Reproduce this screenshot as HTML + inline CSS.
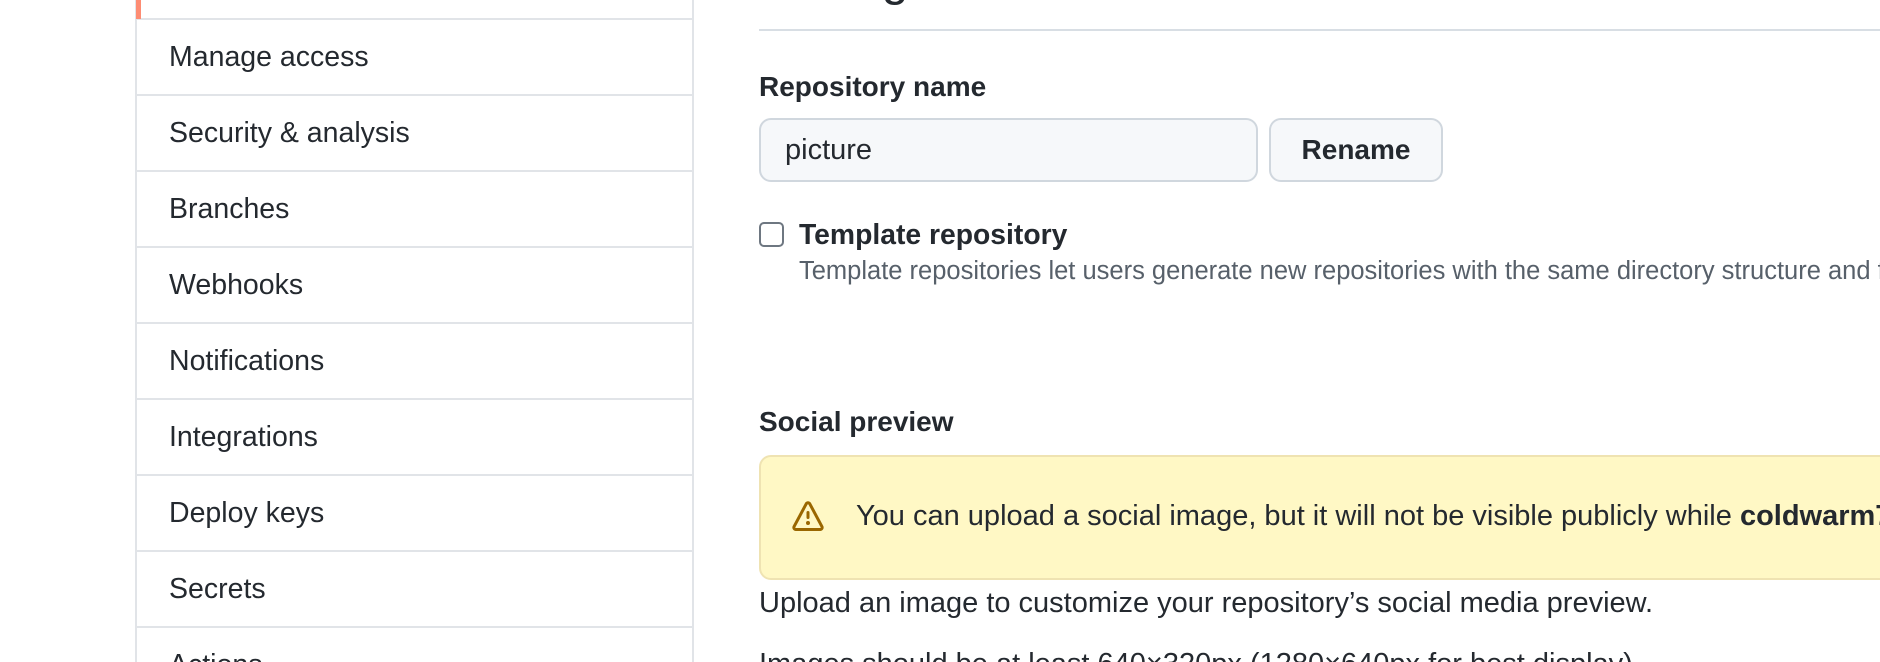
<!DOCTYPE html>
<html><head><meta charset="utf-8"><style>
*{margin:0;padding:0;box-sizing:border-box}
html,body{width:1880px;height:662px;overflow:hidden;background:#fff;font-family:"Liberation Sans",Helvetica,Arial,sans-serif;color:#24292f}
#w{position:relative;width:1880px;height:662px;overflow:hidden}
.side{position:absolute;left:135px;top:-56px;width:559px;border:2px solid #e1e4e8;border-top:none}
.side div{height:76px;border-bottom:2px solid #e1e4e8;font-size:28.5px;line-height:74px;padding-left:32px}
.act{position:absolute;left:136px;top:0;width:5px;height:19px;background:#fd8c73}
.abs{position:absolute;white-space:nowrap}
</style></head><body><div id="w">
<div class="side">
<div></div>
<div>Manage access</div>
<div>Security &amp; analysis</div>
<div>Branches</div>
<div>Webhooks</div>
<div>Notifications</div>
<div>Integrations</div>
<div>Deploy keys</div>
<div>Secrets</div>
<div>Actions</div>
</div>
<div class="act"></div>
<div class="abs" style="left:759px;top:-48px;font-size:48px;">Settings</div>
<div class="abs" style="left:759px;top:29px;width:1121px;height:2px;background:#d8dee4"></div>
<div class="abs" style="left:759px;top:71px;font-size:28px;font-weight:bold;">Repository name</div>
<div class="abs" style="left:759px;top:118px;width:499px;height:64px;background:#f6f8fa;border:2px solid #d0d7de;border-radius:12px;font-size:29px;line-height:60px;padding-left:24px">picture</div>
<div class="abs" style="left:1269px;top:118px;width:174px;height:64px;background:#f6f8fa;border:2px solid #d0d7de;border-radius:12px;font-size:28px;font-weight:bold;line-height:60px;text-align:center">Rename</div>
<div class="abs" style="left:759px;top:222px;width:25px;height:25px;border:2px solid #6e7781;border-radius:5px;background:#fff"></div>
<div class="abs" style="left:799px;top:218px;font-size:28.3px;font-weight:bold;">Template repository</div>
<div class="abs" style="left:799px;top:257px;font-size:25.5px;color:#57606a;">Template repositories let users generate new repositories with the same directory structure and files.</div>
<div class="abs" style="left:759px;top:406px;font-size:28px;font-weight:bold;">Social preview</div>
<div class="abs" style="left:759px;top:455px;width:1140px;height:125px;background:#fff8c5;border:2px solid #efe3b2;border-radius:12px"></div>
<svg class="abs" style="left:792px;top:501px" width="32" height="32" viewBox="0 0 16 16"><path fill="#9a6700" d="M6.457 1.047c.659-1.234 2.427-1.234 3.086 0l6.082 11.378A1.75 1.75 0 0 1 14.082 15H1.918a1.75 1.75 0 0 1-1.543-2.575Zm1.763.707a.25.25 0 0 0-.44 0L1.698 13.132a.25.25 0 0 0 .22.368h12.164a.25.25 0 0 0 .22-.368Zm.53 3.996v2.5a.75.75 0 0 1-1.5 0v-2.5a.75.75 0 0 1 1.5 0ZM9 11a1 1 0 1 1-2 0 1 1 0 0 1 2 0Z"/></svg>
<div class="abs" style="left:856px;top:500px;font-size:29px;">You can upload a social image, but it will not be visible publicly while <b>coldwarm7/picture</b> is private.</div>
<div class="abs" style="left:759px;top:587px;font-size:29px;">Upload an image to customize your repository’s social media preview.</div>
<div class="abs" style="left:759px;top:648px;font-size:29px;">Images should be at least 640×320px (1280×640px for best display).</div>
</div></body></html>
